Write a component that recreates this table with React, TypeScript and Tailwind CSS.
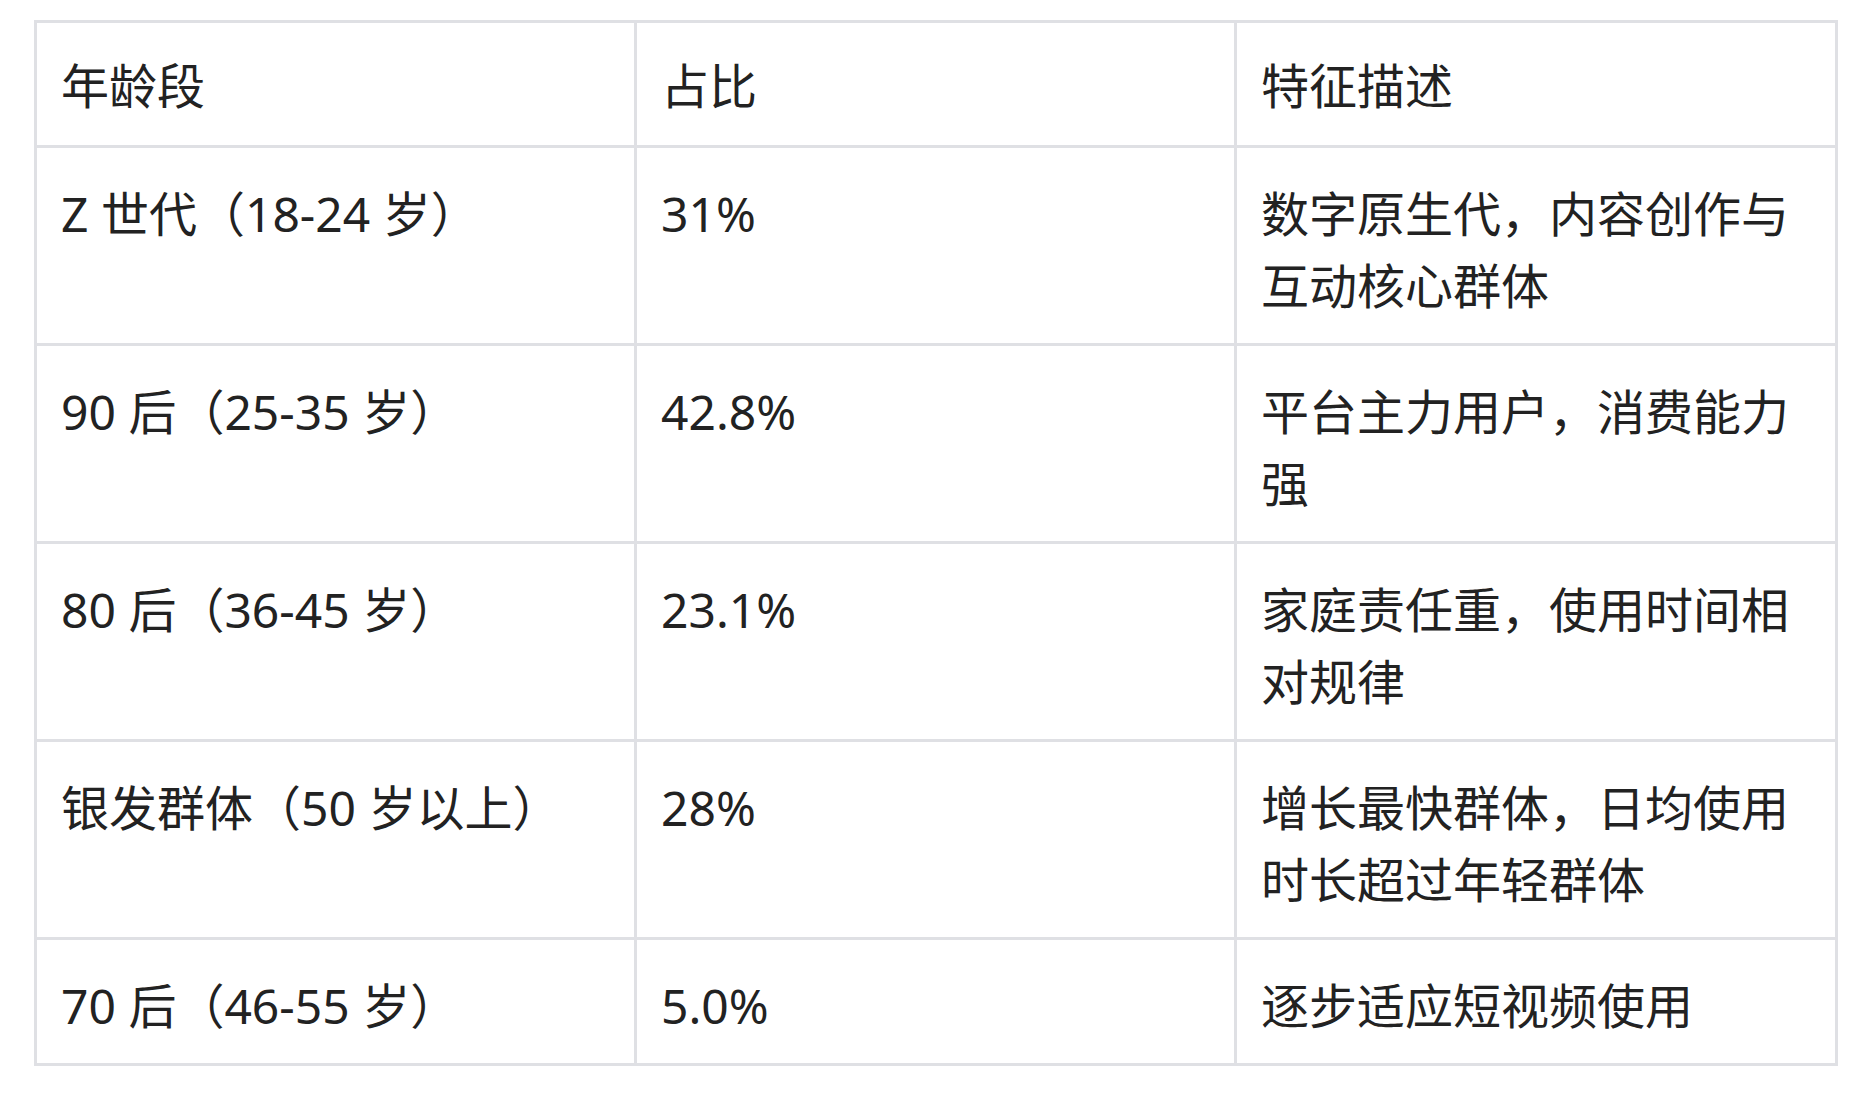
const rows = [
  { age: "Z 世代（18-24 岁）", share: "31%", desc: "数字原生代，内容创作与互动核心群体" },
  { age: "90 后（25-35 岁）", share: "42.8%", desc: "平台主力用户，消费能力强" },
  { age: "80 后（36-45 岁）", share: "23.1%", desc: "家庭责任重，使用时间相对规律" },
  { age: "银发群体（50 岁以上）", share: "28%", desc: "增长最快群体，日均使用时长超过年轻群体" },
  { age: "70 后（46-55 岁）", share: "5.0%", desc: "逐步适应短视频使用" },
];

export default function App() {
  const base = "border-[3px] border-[#dfe0e4] px-[24px] text-left align-top font-normal";
  const head = `${base} pt-[27px] pb-[23px]`;
  const cell = `${base} pt-[30px] pb-[21px]`;
  return (
    <div
      className="min-h-[1093px] bg-white pl-[34px] pt-[20px] text-[48px] leading-[72px] text-[#222222]"
      style={{ fontFamily: '"Noto Sans", "Noto Sans CJK SC", sans-serif' }}
    >
      <table className="w-[1804px] table-fixed border-collapse">
        <thead>
          <tr>
            <th className={`${head} w-[600px]`}>年龄段</th>
            <th className={`${head} w-[600px]`}>占比</th>
            <th className={head}>特征描述</th>
          </tr>
        </thead>
        <tbody>
          {rows.map((r) => (
            <tr key={r.age}>
              <td className={cell}>{r.age}</td>
              <td className={cell}>{r.share}</td>
              <td className={cell}>{r.desc}</td>
            </tr>
          ))}
        </tbody>
      </table>
    </div>
  );
}
